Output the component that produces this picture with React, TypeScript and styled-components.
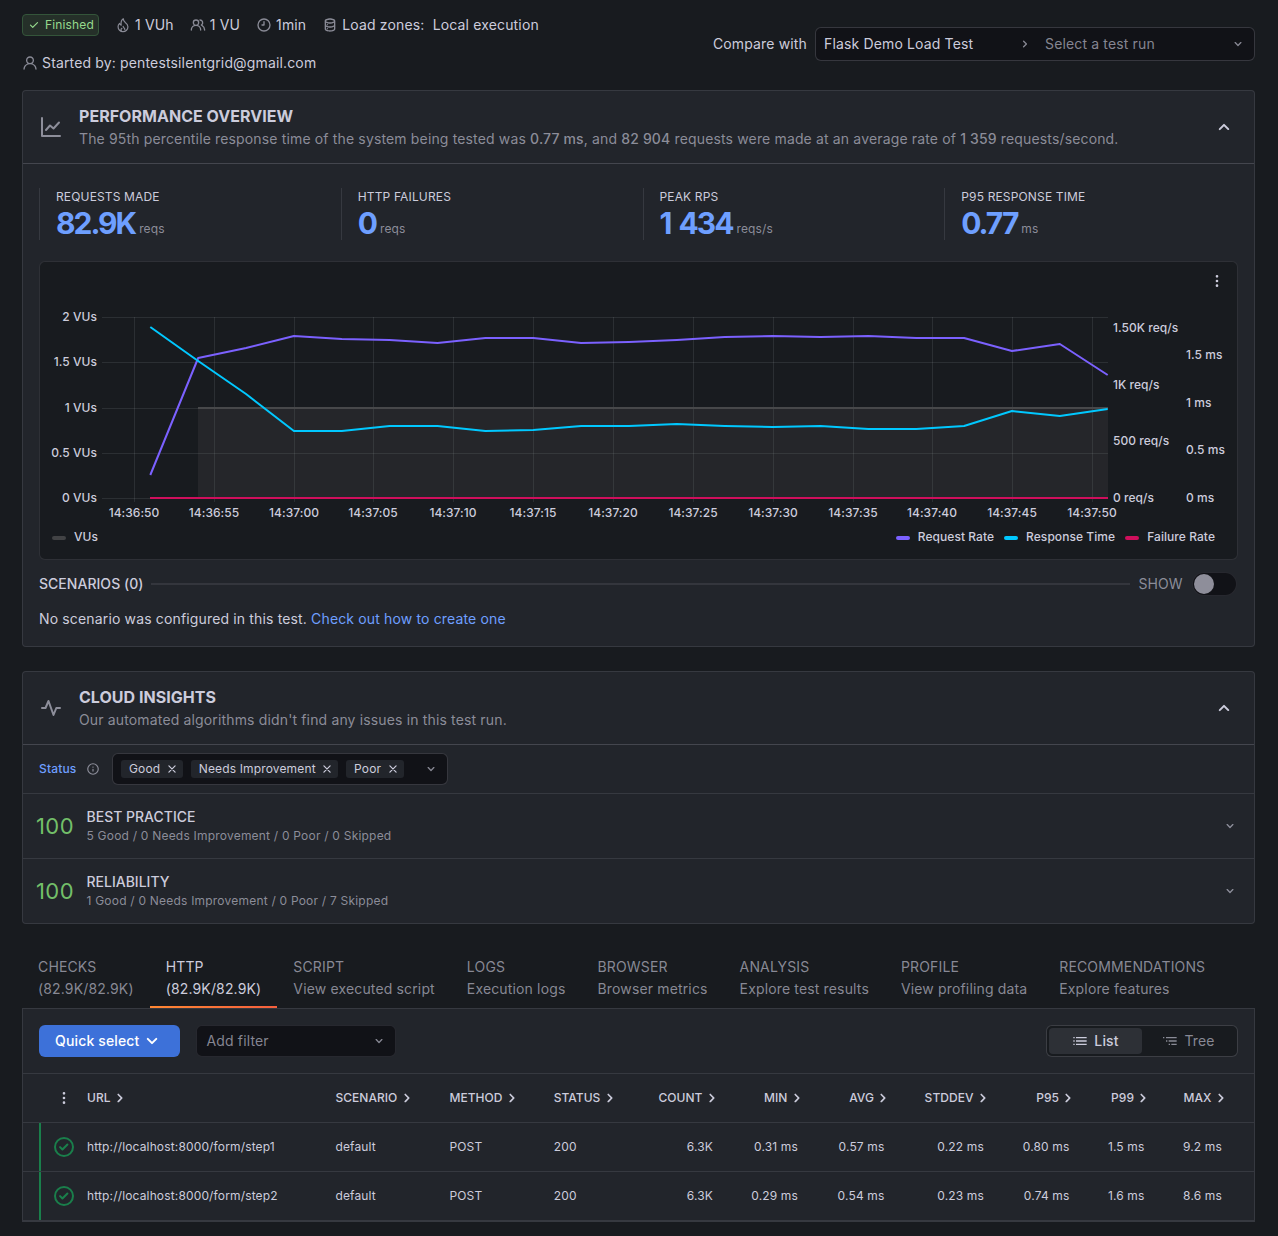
import React from "react";
import styled, { createGlobalStyle } from "styled-components";

const c = {
  canvas: "#181b1f",
  panel: "#22252b",
  input: "#111217",
  text: "rgb(204,204,220)",
  muted: "rgba(204,204,220,0.63)",
  weak: "rgba(204,204,220,0.12)",
  medium: "rgba(204,204,220,0.2)",
  link: "#6e9fff",
  green: "#73bf69",
};

const Global = createGlobalStyle`
  * { box-sizing: border-box; }
  body {
    margin: 0;
    background: ${c.canvas};
    color: ${c.text};
    font: 400 14px/22px Inter, "Liberation Sans", sans-serif;
    letter-spacing: 0.15px;
  }
`;

const paths = {
  down: "M17,9.17a1,1,0,0,0-1.41,0L12,12.71,8.46,9.17a1,1,0,0,0-1.41,0,1,1,0,0,0,0,1.42l4.24,4.24a1,1,0,0,0,1.42,0L17,10.59A1,1,0,0,0,17,9.17Z",
  up: "M17,13.41,12.71,9.17a1,1,0,0,0-1.42,0L7.05,13.41a1,1,0,0,0,0,1.42,1,1,0,0,0,1.41,0L12,11.29l3.54,3.54a1,1,0,0,0,.7.29,1,1,0,0,0,.71-.29A1,1,0,0,0,17,13.41Z",
  right: "M14.83,11.29,10.59,7.05a1,1,0,0,0-1.42,0,1,1,0,0,0,0,1.41L12.71,12,9.17,15.54a1,1,0,0,0,0,1.41,1,1,0,0,0,.71.29,1,1,0,0,0,.71-.29l4.24-4.24A1,1,0,0,0,14.83,11.29Z",
  check: "M18.71,7.21a1,1,0,0,0-1.42,0L9.84,14.67,6.71,11.53A1,1,0,1,0,5.29,13l3.84,3.84a1,1,0,0,0,1.42,0l8.16-8.16A1,1,0,0,0,18.71,7.21Z",
  checkCircle: "M14.72,8.79l-4.29,4.3L8.78,11.44a1,1,0,1,0-1.41,1.41l2.35,2.36a1,1,0,0,0,.71.29,1,1,0,0,0,.7-.29l5-5a1,1,0,0,0,0-1.42A1,1,0,0,0,14.72,8.79ZM12,2A10,10,0,1,0,22,12,10,10,0,0,0,12,2Zm0,18a8,8,0,1,1,8-8A8,8,0,0,1,12,20Z",
  user: "M15.71,12.71a6,6,0,1,0-7.42,0,10,10,0,0,0-6.22,8.18,1,1,0,0,0,2,.22,8,8,0,0,1,15.9,0,1,1,0,0,0,1,.89h.11a1,1,0,0,0,.88-1.1A10,10,0,0,0,15.71,12.71ZM12,12a4,4,0,1,1,4-4A4,4,0,0,1,12,12Z",
  users: "M12.3,12.22A4.92,4.92,0,0,0,14,8.5a5,5,0,0,0-10,0,4.92,4.92,0,0,0,1.7,3.72A8,8,0,0,0,1,19.5a1,1,0,0,0,2,0,6,6,0,0,1,12,0,1,1,0,0,0,2,0A8,8,0,0,0,12.3,12.22ZM9,11.5a3,3,0,1,1,3-3A3,3,0,0,1,9,11.5Zm9.74.32A5,5,0,0,0,15,3.5a1,1,0,0,0,0,2,3,3,0,0,1,3,3,3,3,0,0,1-1.5,2.59,1,1,0,0,0-.5.84,1,1,0,0,0,.45.86l.39.26.13.07a7,7,0,0,1,4,6.38,1,1,0,0,0,2,0A9,9,0,0,0,18.74,11.82Z",
  clock: "M12,2A10,10,0,1,0,22,12,10,10,0,0,0,12,2Zm0,18a8,8,0,1,1,8-8A8,8,0,0,1,12,20ZM12,6a1,1,0,0,0-1,1v4H9a1,1,0,0,0,0,2h3a1,1,0,0,0,1-1V7A1,1,0,0,0,12,6Z",
  database: "M8,16.5a1,1,0,1,0,1,1A1,1,0,0,0,8,16.5ZM12,2C8,2,4,3.37,4,6V18c0,2.63,4,4,8,4s8-1.37,8-4V6C20,3.37,16,2,12,2Zm6,16c0,.71-2.28,2-6,2s-6-1.29-6-2V14.73A13.16,13.16,0,0,0,12,16a13.16,13.16,0,0,0,6-1.27Zm0-6c0,.71-2.28,2-6,2s-6-1.29-6-2V8.73A13.16,13.16,0,0,0,12,10a13.16,13.16,0,0,0,6-1.27ZM12,8C8.28,8,6,6.71,6,6s2.28-2,6-2,6,1.29,6,2S15.72,8,12,8ZM8,10.5a1,1,0,1,0,1,1A1,1,0,0,0,8,10.5Z",
  info: "M12,2A10,10,0,1,0,22,12,10,10,0,0,0,12,2Zm0,18a8,8,0,1,1,8-8A8,8,0,0,1,12,20Zm0-8.5a1,1,0,0,0-1,1v3a1,1,0,0,0,2,0v-3A1,1,0,0,0,12,11.5Zm0-4a1.25,1.25,0,1,0,1.25,1.25A1.25,1.25,0,0,0,12,7.5Z",
  dots: "M12,7a2,2,0,1,0-2-2A2,2,0,0,0,12,7Zm0,10a2,2,0,1,0,2,2A2,2,0,0,0,12,17Zm0-7a2,2,0,1,0,2,2A2,2,0,0,0,12,10Z",
  list: "M2,6h2v2H2ZM6,6H22v2H6ZM2,11h2v2H2ZM6,11H22v2H6ZM2,16h2v2H2ZM6,16H22v2H6Z",
  tree: "M1.500,6h2v2H1.500ZM6,6H22v2H6ZM6,11h2v2H6ZM10,11H22v2H10ZM10,16h2v2H10ZM14,16H22v2H14Z",
};

const lines = {
  fire: "M6.800,9.600C7.300,11.200,8.200,12,9.300,12.200C8.600,8.200,9.600,4.600,12.400,2.600C12.500,5.800,13.800,7,15.800,8.600A8,8,0,0,1,19.400,14.600a7.400,7.400,0,1,1-14.800,0C4.600,12.600,5.400,10.800,6.800,9.600ZM10,21.300C8.400,19.900,8.800,18,10.400,17M12.300,14.200C12.500,16.200,14.900,16.600,14.700,18.800",
  chart: "M3,3V21H21M7,15L11,10.500L14.500,13.500L20,7.500",
  pulse: "M3,12H6.500L9.500,5L14.500,19L17.300,12H21",
  times: "M5.800,5.800L18.200,18.200M18.200,5.800L5.800,18.200",
};

const Svg = styled.svg<{ $color?: string }>`
  display: block;
  flex: none;
  fill: currentColor;
  color: ${(p) => p.$color ?? "inherit"};
`;

type IconProps = { name: keyof typeof paths; size?: number; color?: string };
const Icon = ({ name, size = 16, color }: IconProps) => (
  <Svg width={size} height={size} viewBox="0 0 24 24" $color={color}>
    <path d={paths[name]} />
  </Svg>
);

const LineIcon = ({ name, size = 16, color, weight = 2 }: { name: keyof typeof lines; size?: number; color?: string; weight?: number }) => (
  <Svg width={size} height={size} viewBox="0 0 24 24" $color={color}>
    <path d={lines[name]} fill="none" stroke="currentColor" strokeWidth={weight} strokeLinecap="round" strokeLinejoin="round" />
  </Svg>
);

const Page = styled.main`
  width: 1278px;
  height: 1236px;
  padding: 14px 23px 0 22px;
  overflow: hidden;
`;

const TopBar = styled.header`
  display: flex;
  justify-content: space-between;
  height: 76px;
`;

const Meta = styled.div`
  display: flex;
  flex-direction: column;
  gap: 16px;
`;

const MetaRow = styled.div`
  display: flex;
  align-items: center;
  height: 22px;
`;

const MetaItem = styled.span`
  display: inline-flex;
  align-items: center;
  gap: 4px;
  margin-right: 16px;
  white-space: pre;
`;

const Badge = styled.span`
  display: inline-flex;
  align-items: center;
  gap: 4px;
  width: 77px;
  height: 22px;
  margin-right: 16px;
  padding-left: 4px;
  border: 1px solid #34553a;
  border-radius: 4px;
  background: #253029;
  color: #96d98d;
  font-size: 12px;
  line-height: 18px;
`;

const Compare = styled.div`
  display: flex;
  align-items: center;
  gap: 8px;
  height: 34px;
  margin-top: 13px;
`;

const RunPicker = styled.div`
  display: flex;
  align-items: center;
  width: 440px;
  height: 34px;
  padding: 0 8px;
  border: 1px solid ${c.medium};
  border-radius: 6px;
  background: ${c.input};
`;

const PickedTest = styled.span`
  width: 193px;
`;

const PickedRun = styled.span`
  flex: 1;
  margin-left: 12px;
  color: ${c.muted};
`;

const Panel = styled.section`
  border: 1px solid ${c.weak};
  border-radius: 4px;
  background: ${c.panel};
`;

const PanelHead = styled.div`
  display: flex;
  align-items: center;
  height: 73px;
  padding: 0 18px 0 16px;
  border-bottom: 1px solid ${c.medium};
`;

const PanelTitles = styled.div`
  flex: 1;
  margin-left: 16px;
`;

const Title = styled.h2`
  margin: 0;
  font-size: 16px;
  line-height: 22px;
  font-weight: 700;
  letter-spacing: 0.03px;
`;

const Sub = styled.p`
  margin: 0;
  line-height: 23px;
  color: ${c.muted};
  b { font-weight: 500; }
`;

const Overview = styled.div`
  height: 482px;
  padding: 24px 16px 0;
`;

const Kpis = styled.div`
  display: grid;
  grid-template-columns: repeat(4, 1fr);
  gap: 8px;
  height: 52px;
`;

const Kpi = styled.div`
  padding-left: 16px;
  border-left: 1px solid ${c.weak};
  font-size: 12px;
  line-height: 18px;
`;

const KpiValue = styled.div`
  display: flex;
  align-items: flex-end;
  gap: 4px;
  color: ${c.muted};
  strong {
    color: ${c.link};
    font-size: 30px;
    line-height: 34px;
    font-weight: 700;
    letter-spacing: -2px;
    word-spacing: 3px;
  }
  span { margin-bottom: 2px; }
`;

const ChartCard = styled.div`
  height: 299px;
  margin-top: 21px;
  border: 1px solid ${c.weak};
  border-radius: 6px;
  background: ${c.canvas};
`;

const ChartMenu = styled.div`
  display: flex;
  justify-content: flex-end;
  height: 38px;
  padding: 11px 12px 0 0;
`;

const ChartSvg = styled.svg`
  display: block;
  text {
    fill: ${c.text};
    font: 500 12px Inter, sans-serif;
    letter-spacing: 0.04px;
  }
`;

const Legend = styled.div`
  display: flex;
  align-items: center;
  gap: 10px;
  height: 18px;
  padding: 0 22px 0 12px;
  font-size: 12px;
  font-weight: 500;
  letter-spacing: 0.06px;
`;

const LegendItem = styled.span<{ $color: string; $push?: boolean }>`
  display: flex;
  align-items: center;
  gap: 8px;
  margin-right: ${(p) => (p.$push ? "auto" : 0)};
  &::before {
    content: "";
    width: 14px;
    height: 4px;
    margin-top: 2px;
    border-radius: 2px;
    background: ${(p) => p.$color};
  }
`;

const ScenarioBar = styled.div`
  display: flex;
  align-items: center;
  gap: 8px;
  height: 24px;
  margin-top: 12px;
  padding-right: 1px;
  font-weight: 500;
  letter-spacing: 0.03px;
`;

const Rule = styled.span`
  flex: 1;
  height: 2px;
  background: #34363d;
`;

const ShowLabel = styled.span`
  font-weight: 400;
  color: ${c.muted};
`;

const Toggle = styled.span`
  width: 45.500px;
  height: 24px;
  margin-left: 1px;
  padding: 1px;
  border: 1px solid ${c.weak};
  border-radius: 12px;
  background: ${c.input};
  &::before {
    content: "";
    display: block;
    width: 20px;
    height: 20px;
    border-radius: 50%;
    background: #8e8e9a;
  }
`;

const Note = styled.p`
  margin: 12px 0 0;
  span { color: ${c.link}; }
`;

const StatusRow = styled.div`
  display: flex;
  align-items: center;
  height: 49px;
  padding-left: 16px;
  border-bottom: 1px solid ${c.weak};
  font-size: 12px;
`;

const StatusLabel = styled.span`
  width: 47px;
  color: ${c.link};
  font-weight: 500;
`;

const TagSelect = styled.div`
  display: flex;
  align-items: center;
  gap: 8px;
  width: 336px;
  height: 32px;
  margin-left: 12px;
  padding: 0 8px;
  border: 1px solid ${c.medium};
  border-radius: 6px;
  background: ${c.input};
`;

const Tag = styled.span`
  display: flex;
  align-items: center;
  gap: 5.400px;
  height: 18px;
  padding: 0 5px 0 8px;
  border-radius: 3px;
  background: ${c.panel};
`;

const TagCaret = styled.span`
  margin-left: auto;
  color: ${c.muted};
`;

const ScoreRow = styled.div<{ $last?: boolean }>`
  display: flex;
  align-items: center;
  height: ${(p) => (p.$last ? 64 : 65)}px;
  padding: 0 16px 0 13px;
  border-bottom: ${(p) => (p.$last ? "none" : `1px solid ${c.weak}`)};
`;

const Score = styled.span`
  width: 50.500px;
  color: ${c.green};
  font-size: 22px;
  letter-spacing: 0.4px;
`;

const ScoreText = styled.div`
  flex: 1;
  font-weight: 500;
  line-height: 20px;
  letter-spacing: 0;
  small {
    display: block;
    color: ${c.muted};
    font-size: 12px;
    line-height: 18px;
    font-weight: 400;
    letter-spacing: 0.21px;
  }
`;

const Tabs = styled.nav`
  display: flex;
  height: 60px;
  margin-top: 24px;
`;

const Tab = styled.div<{ $active?: boolean }>`
  height: 60px;
  padding: 8px 16px 0;
  color: ${(p) => (p.$active ? c.text : c.muted)};
  border-bottom: 2px solid transparent;
  border-image: ${(p) => (p.$active ? "linear-gradient(90deg, #ff8833, #f55f3e) 1" : "none")};
`;

const HttpPanel = styled.section`
  border: 1px solid ${c.weak};
  border-bottom-width: 2px;
  background: ${c.panel};
`;

const Toolbar = styled.div`
  display: flex;
  align-items: center;
  height: 65px;
  padding: 0 16px;
  border-bottom: 1px solid ${c.weak};
`;

const QuickSelect = styled.button`
  display: flex;
  align-items: center;
  width: 141px;
  height: 32px;
  padding: 0 12px 0 16px;
  border: 0;
  border-radius: 6px;
  background: #3d71d9;
  color: #fff;
  font: 500 14px/22px Inter, sans-serif;
  letter-spacing: 0.15px;
`;

const FilterSelect = styled.div`
  display: flex;
  align-items: center;
  justify-content: space-between;
  width: 200px;
  height: 32px;
  margin-left: 16px;
  padding: 0 8px 0 9.500px;
  border: 1px solid ${c.weak};
  border-radius: 6px;
  background: ${c.input};
  color: ${c.muted};
`;

const Segments = styled.div`
  display: flex;
  width: 192px;
  height: 32px;
  margin-left: auto;
  padding: 2px;
  border: 1px solid ${c.medium};
  border-radius: 6px;
  background: ${c.canvas};
`;

const Segment = styled.div<{ $on?: boolean }>`
  display: flex;
  flex: 1;
  align-items: center;
  justify-content: center;
  gap: 6px;
  border-radius: 4px;
  background: ${(p) => (p.$on ? "#2d3036" : "transparent")};
  color: ${(p) => (p.$on ? c.text : c.muted)};
  font-weight: ${(p) => (p.$on ? 500 : 400)};
`;

const GridRow = styled.div<{ $head?: boolean; $last?: boolean }>`
  display: grid;
  grid-template-columns: 56px 248.400px 114px 104.300px 104.300px 71px 85px 86.500px 99.500px 85.500px 75px 77.500px;
  align-items: center;
  height: ${(p) => (p.$last ? 48 : 49)}px;
  border-bottom: ${(p) => (p.$last ? "none" : `1px solid ${c.weak}`)};
  font-size: 12px;
  font-weight: ${(p) => (p.$head ? 500 : 400)};
  letter-spacing: ${(p) => (p.$head ? "0.04px" : "0.15px")};
`;

const Cell = styled.div<{ $right?: boolean; $head?: boolean }>`
  display: flex;
  align-items: center;
  justify-content: ${(p) => (p.$right ? "flex-end" : "flex-start")};
  padding: 0 ${(p) => (p.$head ? 0 : 8)}px 0 ${(p) => (p.$right ? 0 : 8)}px;
  white-space: nowrap;
  svg { margin: 0 -1px 0 -0.5px; }
`;

const Mark = styled.div<{ $ok?: boolean }>`
  display: flex;
  align-items: center;
  align-self: stretch;
  margin-left: 16px;
  padding-left: ${(p) => (p.$ok ? 11 : 17)}px;
  border-left: ${(p) => (p.$ok ? "2px solid #1a7f4b" : "none")};
`;

const Gap = styled.div`
  height: 24px;
`;

const purple = [475, 358, 348, 336, 339, 340, 343, 338, 338, 343, 342, 340, 337, 336, 337, 336, 338, 338, 351, 344, 375];
const cyan = [327, 361, 394, 431, 431, 426, 426, 431, 430, 426, 426, 424, 426, 427, 426, 429, 429, 426, 411, 416, 409];
const OX = 40;
const OY = 300;
const px = (i: number) => 150.3 + i * 47.87 - OX;
const toPoints = (ys: number[]) => ys.map((y, i) => `${px(i)},${y - OY}`).join(" ");
const ticks = ["14:36:50", "14:36:55", "14:37:00", "14:37:05", "14:37:10", "14:37:15", "14:37:20", "14:37:25", "14:37:30", "14:37:35", "14:37:40", "14:37:45", "14:37:50"];
const tickX = [134, 214, 294, 373, 453, 533, 613, 693, 773, 853, 932, 1012, 1092];
const left: [string, number][] = [["2 VUs", 317], ["1.5 VUs", 362], ["1 VUs", 408], ["0.5 VUs", 453], ["0 VUs", 498]];
const rate: [string, number][] = [["1.50K req/s", 328], ["1K req/s", 385], ["500 req/s", 441], ["0 req/s", 498]];
const time: [string, number][] = [["1.5 ms", 355], ["1 ms", 403], ["0.5 ms", 450], ["0 ms", 498]];

const Chart = () => (
  <ChartSvg width="1197" height="228" viewBox="0 0 1197 228">
    {tickX.map((x) => (
      <rect key={x} x={x - OX} y={17} width="1" height="185" fill="rgba(240,250,255,0.09)" />
    ))}
    {left.map(([t, y]) => (
      <rect key={t} x={62} y={y - OY} width="1006" height="1" fill="rgba(240,250,255,0.09)" />
    ))}
    <rect x="158" y="108" width="910" height="90" fill="rgba(115,110,105,0.15)" />
    <rect x="158" y="107" width="910" height="2" fill="#47484a" />
    <g fill="none" strokeWidth="2" strokeLinejoin="round">
      <polyline points={toPoints(purple)} stroke="#7b61ff" />
      <polyline points={toPoints(cyan)} stroke="#00c8ff" />
      <line x1="110" x2="1068" y1="198" y2="198" stroke="#cf0f5c" />
    </g>
    {left.map(([t, y]) => <text key={t} x="57" y={y - OY + 4} textAnchor="end">{t}</text>)}
    {rate.map(([t, y]) => <text key={t} x="1073" y={y - OY + 4}>{t}</text>)}
    {time.map(([t, y]) => <text key={t} x="1146" y={y - OY + 4}>{t}</text>)}
    {ticks.map((t, i) => <text key={t} x={tickX[i] - OX} y="217" textAnchor="middle">{t}</text>)}
  </ChartSvg>
);

const kpis = [
  ["REQUESTS MADE", "82.9K", "reqs"],
  ["HTTP FAILURES", "0", "reqs"],
  ["PEAK RPS", "1 434", "reqs/s"],
  ["P95 RESPONSE TIME", "0.77", "ms"],
];

const scores = [
  ["BEST PRACTICE", "5 Good / 0 Needs Improvement / 0 Poor / 0 Skipped"],
  ["RELIABILITY", "1 Good / 0 Needs Improvement / 0 Poor / 7 Skipped"],
];

const tabs = [
  ["CHECKS", "(82.9K/82.9K)"],
  ["HTTP", "(82.9K/82.9K)"],
  ["SCRIPT", "View executed script"],
  ["LOGS", "Execution logs"],
  ["BROWSER", "Browser metrics"],
  ["ANALYSIS", "Explore test results"],
  ["PROFILE", "View profiling data"],
  ["RECOMMENDATIONS", "Explore features"],
];

const columns = ["URL", "SCENARIO", "METHOD", "STATUS", "COUNT", "MIN", "AVG", "STDDEV", "P95", "P99", "MAX"];
const rows = [
  ["http://localhost:8000/form/step1", "default", "POST", "200", "6.3K", "0.31 ms", "0.57 ms", "0.22 ms", "0.80 ms", "1.5 ms", "9.2 ms"],
  ["http://localhost:8000/form/step2", "default", "POST", "200", "6.3K", "0.29 ms", "0.54 ms", "0.23 ms", "0.74 ms", "1.6 ms", "8.6 ms"],
];

export default function App() {
  return (
    <Page>
      <Global />
      <TopBar>
        <Meta>
          <MetaRow>
            <Badge><Icon name="check" size={14} />Finished</Badge>
            <MetaItem><LineIcon name="fire" color={c.muted} weight={1.8} />1 VUh</MetaItem>
            <MetaItem><Icon name="users" color={c.muted} />1 VU</MetaItem>
            <MetaItem><Icon name="clock" color={c.muted} />1min</MetaItem>
            <MetaItem><Icon name="database" color={c.muted} />Load zones:  Local execution</MetaItem>
          </MetaRow>
          <MetaRow>
            <MetaItem><Icon name="user" color={c.muted} />Started by: pentestsilentgrid@gmail.com</MetaItem>
          </MetaRow>
        </Meta>
        <Compare>
          Compare with
          <RunPicker>
            <PickedTest>Flask Demo Load Test</PickedTest>
            <Icon name="right" color={c.muted} />
            <PickedRun>Select a test run</PickedRun>
            <Icon name="down" color={c.muted} />
          </RunPicker>
        </Compare>
      </TopBar>

      <Panel>
        <PanelHead>
          <LineIcon name="chart" size={24} color={c.muted} />
          <PanelTitles>
            <Title>PERFORMANCE OVERVIEW</Title>
            <Sub>
              The 95th percentile response time of the system being tested was <b>0.77 ms</b>, and <b>82 904</b> requests were made at an average rate of <b>1 359</b> requests/second.
            </Sub>
          </PanelTitles>
          <Icon name="up" size={24} />
        </PanelHead>
        <Overview>
          <Kpis>
            {kpis.map(([label, value, unit]) => (
              <Kpi key={label}>
                {label}
                <KpiValue><strong>{value}</strong><span>{unit}</span></KpiValue>
              </Kpi>
            ))}
          </Kpis>
          <ChartCard>
            <ChartMenu><Icon name="dots" /></ChartMenu>
            <Chart />
            <Legend>
              <LegendItem $color="#424345" $push>VUs</LegendItem>
              <LegendItem $color="#7b61ff">Request Rate</LegendItem>
              <LegendItem $color="#00c8ff">Response Time</LegendItem>
              <LegendItem $color="#cf0f5c">Failure Rate</LegendItem>
            </Legend>
          </ChartCard>
          <ScenarioBar>
            SCENARIOS (0)
            <Rule />
            <ShowLabel>SHOW</ShowLabel>
            <Toggle />
          </ScenarioBar>
          <Note>No scenario was configured in this test. <span>Check out how to create one</span></Note>
        </Overview>
      </Panel>

      <Gap />

      <Panel>
        <PanelHead>
          <LineIcon name="pulse" size={24} color={c.muted} />
          <PanelTitles>
            <Title>CLOUD INSIGHTS</Title>
            <Sub>Our automated algorithms didn't find any issues in this test run.</Sub>
          </PanelTitles>
          <Icon name="up" size={24} />
        </PanelHead>
        <StatusRow>
          <StatusLabel>Status</StatusLabel>
          <Icon name="info" size={14} color={c.muted} />
          <TagSelect>
            {["Good", "Needs Improvement", "Poor"].map((t) => (
              <Tag key={t}>{t}<LineIcon name="times" size={12} weight={2.4} /></Tag>
            ))}
            <TagCaret><Icon name="down" /></TagCaret>
          </TagSelect>
        </StatusRow>
        {scores.map(([name, detail], i) => (
          <ScoreRow key={name} $last={i === 1}>
            <Score>100</Score>
            <ScoreText>{name}<small>{detail}</small></ScoreText>
            <Icon name="down" color={c.muted} />
          </ScoreRow>
        ))}
      </Panel>

      <Tabs>
        {tabs.map(([a, b]) => (
          <Tab key={a} $active={a === "HTTP"}>
            {a}<br />{b}
          </Tab>
        ))}
      </Tabs>

      <HttpPanel>
        <Toolbar>
          <QuickSelect>Quick select<Icon name="down" size={24} /></QuickSelect>
          <FilterSelect>Add filter<Icon name="down" /></FilterSelect>
          <Segments>
            <Segment $on><Icon name="list" />List</Segment>
            <Segment><Icon name="tree" />Tree</Segment>
          </Segments>
        </Toolbar>
        <GridRow $head>
          <Mark><Icon name="dots" /></Mark>
          {columns.map((h, i) => (
            <Cell key={h} $head $right={i > 3}>{h}<Icon name="right" size={20} /></Cell>
          ))}
        </GridRow>
        {rows.map((r, ri) => (
          <GridRow key={r[0]} $last={ri === 1}>
            <Mark $ok><Icon name="checkCircle" size={24} color="#1a7f4b" /></Mark>
            {r.map((v, i) => (
              <Cell key={i} $right={i > 3}>{v}</Cell>
            ))}
          </GridRow>
        ))}
      </HttpPanel>
    </Page>
  );
}
